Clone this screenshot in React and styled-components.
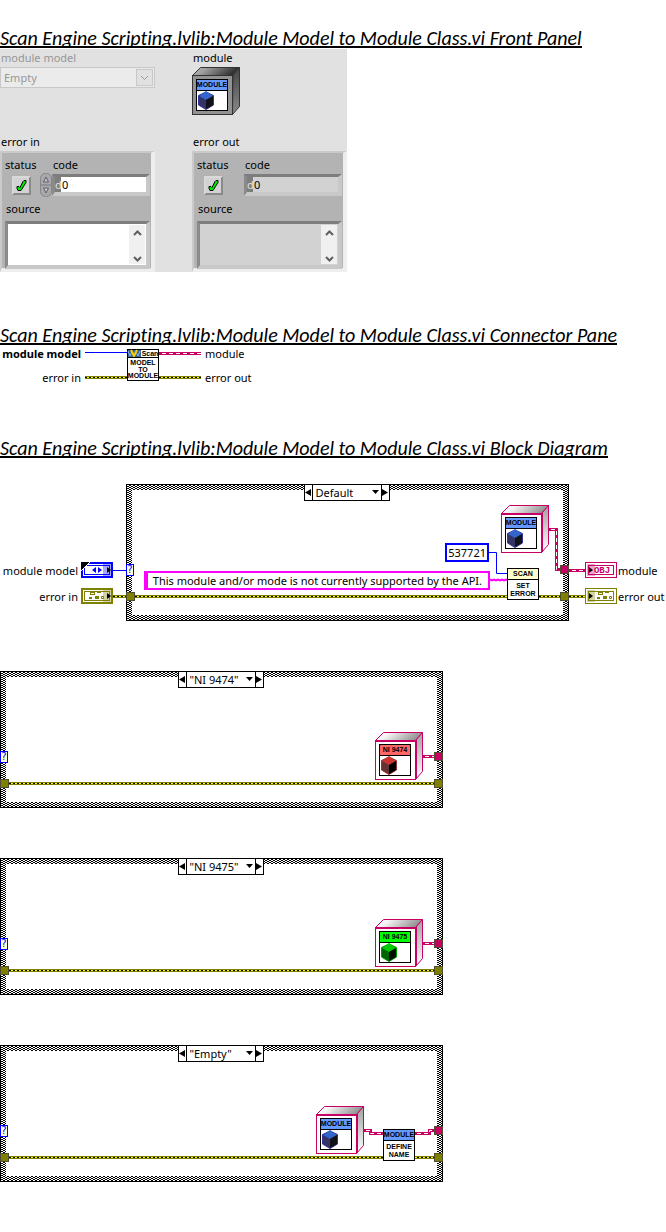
import React, { useId } from "react";
import styled, { createGlobalStyle } from "styled-components";

const PINK = "#c80064";
const OLIVE = "#808000";
const BLUE = "#0000ff";
const MAGENTA = "#ff00ff";

const GlobalStyle = createGlobalStyle`
  *, *::before, *::after { box-sizing: border-box; }
  body { margin: 0; background: #fff; }
  body, button, input, select, textarea {
    font: 11px/16px "Noto Sans", "Open Sans", sans-serif;
    color: #000;
  }
  svg { display: block; flex: none; }
`;

const Page = styled.main`
  display: flex;
  flex-direction: column;
  padding: 22px 0 50px;
`;

const Heading = styled.h2`
  align-self: flex-start;
  height: 26px;
  margin: ${(p) => p.$gap || 0}px 0 1px;
  border-bottom: 2px solid #000;
  overflow: hidden;
  white-space: nowrap;
  font: italic 400 20px/32px Carlito, Lato, sans-serif;
  font-variant-ligatures: none;
`;

/* ---------- front panel ---------- */

const FrontPanel = styled.section`
  display: grid;
  grid-template-columns: 155px 155px;
  column-gap: 37px;
  align-self: flex-start;
  background: #e1e1e1;
`;

const Control = styled.div`
  display: flex;
  flex-direction: column;
  align-items: flex-start;
  min-height: ${(p) => p.$min || 0}px;
`;

const Caption = styled.label`
  padding-left: 1px;
  height: 18px;
  line-height: 18px;
  color: ${(p) => (p.$dim ? "#979797" : "#000")};
  white-space: nowrap;
`;

const Combo = styled.div`
  position: relative;
  width: 100%;
  height: 21px;
  border: 1px solid #c8c8c8;
  background: #ebebeb;
`;

const ComboSelect = styled.select`
  width: 100%;
  height: 19px;
  padding: 0 3px;
  border: 0;
  appearance: none;
  background: transparent;
  color: #979797;
  opacity: 1;
`;

const ComboArrow = styled.svg`
  position: absolute;
  right: 1px;
  top: 1px;
  pointer-events: none;
`;

const ClusterBox = styled.div`
  width: 155px;
  height: 121px;
  padding: 4px 1px 0 3px;
  border-style: solid;
  border-width: 2px 4px 4px 2px;
  border-color: #cacaca #eeeeee #eeeeee #cacaca;
  background: #b3b3b3;
`;

const ClusterRow = styled.div`
  display: flex;
  align-items: center;
  height: ${(p) => p.$h}px;
`;

const FieldLabel = styled.label`
  flex: none;
  width: ${(p) => p.$w || "auto"};
  padding-left: ${(p) => p.$pad || 0};
  line-height: 16px;
`;

const Status = styled.span`
  position: relative;
  flex: none;
  width: 19px;
  height: 19px;
  margin: 0 9px 0 7px;
  border: 2px solid;
  border-color: #d8d8d8 #8a8a8a #8a8a8a #d8d8d8;
  background: #d2d2d2;
`;

const StatusInput = styled.input`
  position: absolute;
  inset: 0;
  width: 100%;
  height: 100%;
  margin: 0;
  opacity: 0;
`;

const SpinnerSlot = styled.span`
  flex: none;
  width: 12px;
`;

const Sunken = styled.div`
  display: flex;
  flex: 1;
  min-width: 0;
  height: ${(p) => p.$h}px;
  border: 3px solid;
  border-width: 3px 4px 4px 3px;
  border-color: #7d7d7d #c8c8c8 #c8c8c8 #8a8a8a;
  background: ${(p) => (p.$readOnly ? "#d2d2d2" : "#fff")};
`;

const Radix = styled.span`
  width: 6px;
  background: #7d7d7d;
  color: #e1e1e1;
  line-height: 15px;
`;

const CodeInput = styled.input`
  flex: 1;
  min-width: 0;
  padding: 0 1px;
  border: 0;
  background: transparent;
`;

const SourceText = styled.textarea`
  flex: 1;
  min-width: 0;
  border: 0;
  resize: none;
  overflow: hidden;
  background: transparent;
`;

const ScrollBar = styled.div`
  display: flex;
  flex-direction: column;
  justify-content: space-between;
  align-items: center;
  width: 16px;
  margin: 1px 1px 1px 0;
  padding: 4px 0 1px;
  background: #f0f0f0;
`;

function StatusLamp({ id }) {
  return (
    <Status>
      <StatusInput type="checkbox" id={id} defaultChecked />
      <svg width="15" height="15">
        <path d="M3 8.500h2l1 1L9 3.500l1-1h2v2L7 12.500H4l-1-2Z" fill="#00e600" stroke="#000" />
      </svg>
    </Status>
  );
}

function Spinner() {
  return (
    <svg width="12" height="24">
      <rect x=".5" y=".5" width="11" height="23" rx="5" fill="#a9a9ad" stroke="#85858a" />
      <path d="M1 12h10" stroke="#77777c" />
      <path d="M3.500 9 6 4l2.500 5Z" fill="#c9c9cd" stroke="#5f5f64" />
      <path d="M3.500 15 6 20l2.500-5Z" fill="#c9c9cd" stroke="#5f5f64" />
    </svg>
  );
}

function Chevron({ up }) {
  return (
    <svg width="9" height="7">
      <path d={up ? "M1 6 4.500 2.500 8 6" : "M1 1 4.500 4.500 8 1"} fill="none" stroke="#606060" strokeWidth="2" />
    </svg>
  );
}

function ErrorCluster({ readOnly }) {
  const id = useId();
  return (
    <ClusterBox>
      <ClusterRow $h={16}>
        <FieldLabel $w="48px" htmlFor={id + "s"}>status</FieldLabel>
        <FieldLabel htmlFor={id + "c"}>code</FieldLabel>
      </ClusterRow>
      <ClusterRow $h={24}>
        <StatusLamp id={id + "s"} />
        <SpinnerSlot>{!readOnly && <Spinner />}</SpinnerSlot>
        <Sunken $h={22} $readOnly={readOnly}>
          <Radix>d</Radix>
          <CodeInput id={id + "c"} defaultValue="0" readOnly={readOnly} />
        </Sunken>
      </ClusterRow>
      <ClusterRow $h={24}>
        <FieldLabel $pad="1px" htmlFor={id + "t"}>source</FieldLabel>
      </ClusterRow>
      <ClusterRow $h={48}>
        <Sunken $h={48} $readOnly={readOnly}>
          <SourceText id={id + "t"} readOnly={readOnly} />
          <ScrollBar>
            <Chevron up />
            <Chevron />
          </ScrollBar>
        </Sunken>
      </ClusterRow>
    </ClusterBox>
  );
}

/* ---------- icons ---------- */

const IconText = styled.text`
  font: 700 7px "Liberation Sans", sans-serif;
  text-anchor: middle;
`;

const cubes = {
  blue: { banner: "#6699ff", top: "#3366cc", left: "#333366", right: "#111118", edge: "#333399" },
  red: { banner: "#ff6666", top: "#cc3333", left: "#663333", right: "#000000", edge: "#993333" },
  green: { banner: "#00ff00", top: "#00cc00", left: "#006600", right: "#001100", edge: "#009900" },
};

function ModuleIcon({ label = "MODULE", cube = "blue", gray }) {
  const id = useId();
  const c = cubes[cube];
  const line = gray ? "#333333" : PINK;
  return (
    <svg width="48" height="48" role="img" aria-label={label}>
      <defs>
        <linearGradient id={id + "t"} x2="1" y2=".2">
          <stop offset="0" stopColor={gray ? "#b4b4b4" : "#ffffff"} />
          <stop offset=".3" stopColor={gray ? "#a0a0a0" : "#f4f4f4"} />
          <stop offset="1" stopColor={gray ? "#2a2a2a" : "#909090"} />
        </linearGradient>
        <linearGradient id={id + "r"} x2="0" y2="1">
          <stop offset="0" stopColor={gray ? "#444444" : "#a0a0a0"} />
          <stop offset="1" stopColor={gray ? "#8a8a8a" : "#ffffff"} />
        </linearGradient>
      </defs>
      <path d="M.5 8.500 8.500.5h39l-7 8Z" fill={`url(#${id}t)`} stroke={line} />
      <path d="M41 8 47.500.5v39l-7 8Z" fill={`url(#${id}r)`} stroke={line} />
      <rect x=".5" y="8.500" width="40" height="39" fill={gray ? "#929292" : "#fff"} stroke={line} />
      {!gray && <path d="M1 9h40v38" fill="none" stroke={line} strokeWidth="2" />}
      <rect x="4.500" y="12.500" width="31" height="31" fill="#fff" stroke="#000" />
      <rect x="5" y="13" width="30" height="10" fill={c.banner} />
      <path d="M5 23.500h30" stroke="#000" />
      <IconText x="20" y="20">{label}</IconText>
      <path d="M14 25 21.500 28.500v9.500L14 42.500 6.500 38v-9.500Z" fill={c.left} stroke={c.edge} />
      <path d="M14 24 21 29l-7 4-7-4Z" fill={c.top} />
      <path d="M14 33 21 29v9l-7 4Z" fill={c.right} />
    </svg>
  );
}

function NodeIcon({ banner, title, lines }) {
  return (
    <svg width="32" height="32" role="img" aria-label={[title, ...lines].join(" ")}>
      <rect x=".5" y=".5" width="31" height="31" fill="#fff" stroke="#000" />
      <rect x="1" y="1" width="30" height="10" fill={banner} />
      <path d="M1 11.500h30" stroke="#000" />
      <IconText x="16" y="8">{title}</IconText>
      {lines.map((l, i) => (
        <IconText key={l} x="16" y={20 + i * 8}>{l}</IconText>
      ))}
    </svg>
  );
}

function ScanIcon() {
  return (
    <svg width="32" height="32" role="img" aria-label="Scan Model to Module">
      <rect x=".5" y=".5" width="31" height="31" fill="#fff" stroke="#000" />
      <rect x="1" y="1" width="13" height="7" fill="#336699" />
      <path d="M1 2l2 5 2-4M9 3l2 4 2-5" fill="none" stroke="#8fb4d8" />
      <path d="M4 1 7 7l3-6" fill="none" stroke="#ffcc00" strokeWidth="2" />
      <path d="M1 8.500h30" stroke="#000" />
      <IconText x="23" y="7">Scan</IconText>
      <IconText x="16" y="16">MODEL</IconText>
      <IconText x="16" y="23">TO</IconText>
      <IconText x="16" y="29">MODULE</IconText>
    </svg>
  );
}

/* ---------- wires ---------- */

const ErrorWire = styled.div`
  flex: none;
  width: ${(p) => p.$w || "auto"};
  height: 3px;
  background:
    repeating-linear-gradient(90deg, #000 0 2px, #ffff00 2px 4px) 0 1px / 100% 1px no-repeat,
    ${OLIVE};
`;

const EnumWire = styled.div`
  flex: none;
  width: ${(p) => p.$w};
  height: 1px;
  background: ${BLUE};
`;

const ObjectWire = styled.div`
  flex: none;
  width: ${(p) => p.$w};
  height: 3px;
  background:
    repeating-linear-gradient(90deg, ${PINK} 0 3px, #fff 3px 7px) 0 1px / 100% 1px no-repeat,
    ${PINK};
`;

function ObjectPath({ d }) {
  return (
    <g fill="none">
      <path d={d} stroke={PINK} strokeWidth="3" />
      <path d={d} stroke="#fff" strokeDasharray="4 3" strokeDashoffset="-2" />
    </g>
  );
}

/* ---------- connector pane ---------- */

const Pane = styled.section`
  display: flex;
  gap: 4px;
  height: 32px;
  margin-top: 3px;
`;

const PaneColumn = styled.div`
  display: flex;
  flex-direction: column;
  gap: 8px;
  margin-top: -3px;
  width: ${(p) => p.$w || "auto"};
  text-align: ${(p) => p.$align || "left"};
`;

const PaneLabel = styled.span`
  font-weight: ${(p) => (p.$required ? 700 : 400)};
  line-height: 16px;
  white-space: nowrap;
`;

const PaneCenter = styled.div`
  display: flex;
`;

const PaneWires = styled.div`
  display: flex;
  flex-direction: column;
  justify-content: space-between;
  height: 30px;
  padding-top: 3px;
`;

/* ---------- block diagram ---------- */

const Diagram = styled.section`
  display: flex;
  flex-direction: column;
  gap: 50px;
  padding-top: 25px;
`;

const DiagramRow = styled.div`
  display: flex;
`;

const Terminals = styled.div`
  display: flex;
  flex: none;
  flex-direction: column;
  gap: 10px;
  width: ${(p) => p.$w};
  padding-top: 78px;
`;

const TerminalRow = styled.div`
  display: flex;
  align-items: center;
  justify-content: ${(p) => (p.$end ? "flex-end" : "flex-start")};
  height: 16px;
`;

const TerminalLabel = styled.span`
  margin: ${(p) => (p.$end ? "0 3px 0 0" : "0 0 0 1px")};
  padding-top: 2px;
  white-space: nowrap;
`;

const CaseFrame = styled.div`
  position: relative;
  flex: ${(p) => (p.$fluid ? "1 1 443px" : "0 0 443px")};
  max-width: ${(p) => (p.$fluid ? "none" : "100%")};
  height: 137px;
  border: 1px solid #000;
  background: repeating-conic-gradient(#000 0 25%, #fff 0 50%) 0 0 / 4px 2px;
`;

const CaseBody = styled.div`
  height: 100%;
  padding: 5px;
  background: #fff content-box;
`;

const Selector = styled.div`
  position: absolute;
  top: -1px;
  left: 50%;
  display: flex;
  width: 86px;
  height: 17px;
  margin-left: -44px;
  border: 1px solid #000;
  background: #fff;
`;

const StepButton = styled.button`
  display: grid;
  place-items: center;
  flex: none;
  width: 7px;
  padding: 0;
  border: 0;
  background: #fff;
`;

const CaseSelect = styled.select`
  flex: 1;
  min-width: 0;
  height: 15px;
  padding: 0 0 0 3px;
  border: solid #000;
  border-width: 0 1px;
  border-radius: 0;
  appearance: none;
  background: #fff;
  line-height: 15px;
`;

const SelectorArrow = styled.svg`
  position: absolute;
  right: 10px;
  top: 5px;
  pointer-events: none;
`;

/* Parts placed on the free canvas inside a case frame. */
const Placed = styled.div`
  position: absolute;
  top: ${(p) => p.$top - 1}px;
  right: ${(p) => p.$right - 1}px;
`;

const WireLayer = styled.svg`
  position: absolute;
  top: -1px;
  right: -1px;
`;

const FrameErrorWire = styled(ErrorWire)`
  position: absolute;
  top: 110px;
  left: 8px;
  right: 8px;
`;

const Tunnel = styled.span`
  position: absolute;
  top: ${(p) => p.$top - 1}px;
  ${(p) => p.$side}: -1px;
  width: 9px;
  height: 9px;
  border: 1px solid #4d4d33;
  background: ${(p) => p.$color};
`;

const CaseTerminal = styled.span`
  position: absolute;
  top: 79px;
  left: -1px;
  width: 8px;
  height: 12px;
  border: 1px solid ${BLUE};
  background: #ffffd8;
  color: ${BLUE};
  font: 10px/10px "DejaVu Sans", sans-serif;
  text-align: center;
`;

const Constant = styled.div`
  height: 19px;
  padding: 0 ${(p) => (p.$text ? "6px 0 5px" : "1px")};
  border: 2px solid ${(p) => p.$color};
  border-left-width: ${(p) => (p.$text ? 4 : 2)}px;
  background: #fff;
  line-height: 16px;
  white-space: nowrap;
`;

function Terminal({ kind, out }) {
  const color = { enum: BLUE, error: OLIVE, object: PINK }[kind];
  const line = out ? 1 : 2;
  return (
    <svg width="32" height="16">
      <rect
        x={line / 2}
        y={line / 2}
        width={32 - line}
        height={16 - line}
        fill="#fff"
        stroke={color}
        strokeWidth={line}
      />
      <rect x="3.500" y="3.500" width="25" height="9" fill="none" stroke={color} />
      {kind === "enum" && (
        <>
          <path d="M15 5v6l-4-3ZM17 5v6l4-3Z" fill={color} />
          <path d="M0 9V0h9Z" fill="#000" />
          <path d="M0 9 9 0" stroke="#fff" />
        </>
      )}
      {kind === "error" && (
        <g transform={out ? "translate(4 0)" : undefined} fill={color}>
          <path d="M9 4h5v3H9ZM10 5v1h3V5Z" fillRule="evenodd" />
          <path d="M16 4h4v1h-4ZM8 9h3v2H8ZM14 8h4v3h-4Z" />
          <path d="M20.500 8.500h2v2h-2Z" fill="none" stroke={color} />
        </g>
      )}
      {kind === "object" && (
        <text x="17" y="11" textAnchor="middle" fill={color} fontFamily="Liberation Mono, monospace" fontWeight="700" fontSize="9">
          OBJ
        </text>
      )}
      <rect x={out ? 2 : 22} y="2" width="8" height="12" fill={color} fillOpacity=".35" />
      <path d={out ? "M4 5v6l4-3Z" : "M26 5v6l4-3Z"} fill="#000" />
    </svg>
  );
}

function CaseStructure({ name, value, fluid, wires, children }) {
  return (
    <CaseFrame $fluid={fluid}>
      <CaseBody />
      <FrameErrorWire />
      <WireLayer width="443" height="137">{wires}</WireLayer>
      {children}
      <CaseTerminal>?</CaseTerminal>
      <Tunnel $side="left" $top={108} $color={OLIVE} />
      <Tunnel $side="right" $top={108} $color={OLIVE} />
      <Tunnel $side="right" $top={81} $color={PINK} />
      <Selector>
        <StepButton aria-label="Previous case">
          <svg width="6" height="7"><path d="M6 0v7L0 3.500Z" /></svg>
        </StepButton>
        <CaseSelect aria-label={name} defaultValue={value}>
          <option>{value}</option>
        </CaseSelect>
        <SelectorArrow width="7" height="4"><path d="M0 0h7L3.500 4Z" /></SelectorArrow>
        <StepButton aria-label="Next case">
          <svg width="6" height="7"><path d="M0 0v7l6-3.500Z" /></svg>
        </StepButton>
      </Selector>
    </CaseFrame>
  );
}

const VI = "Scan Engine Scripting.lvlib:Module Model to Module Class.vi";

export default function App() {
  return (
    <>
      <GlobalStyle />
      <Page>
        <Heading>{VI} Front Panel</Heading>
        <FrontPanel>
          <Control $min={84}>
            <Caption $dim htmlFor="model">module model</Caption>
            <Combo>
              <ComboSelect id="model" disabled defaultValue="Empty">
                <option>Empty</option>
              </ComboSelect>
              <ComboArrow width="17" height="17">
                <rect x=".5" y=".5" width="16" height="16" fill="#e1e1e1" stroke="#c8c8c8" />
                <path d="M5 7l3.500 3.500L12 7" fill="none" stroke="#979797" />
              </ComboArrow>
            </Combo>
          </Control>
          <Control $min={84}>
            <Caption as="span">module</Caption>
            <ModuleIcon gray />
          </Control>
          <Control>
            <Caption as="span">error in</Caption>
            <ErrorCluster />
          </Control>
          <Control>
            <Caption as="span">error out</Caption>
            <ErrorCluster readOnly />
          </Control>
        </FrontPanel>

        <Heading $gap={47}>{VI} Connector Pane</Heading>
        <Pane>
          <PaneColumn $w="81px" $align="right">
            <PaneLabel $required>module model</PaneLabel>
            <PaneLabel>error in</PaneLabel>
          </PaneColumn>
          <PaneCenter>
            <PaneWires>
              <EnumWire $w="42px" />
              <ErrorWire $w="42px" />
            </PaneWires>
            <ScanIcon />
            <PaneWires>
              <ObjectWire $w="42px" />
              <ErrorWire $w="42px" />
            </PaneWires>
          </PaneCenter>
          <PaneColumn>
            <PaneLabel>module</PaneLabel>
            <PaneLabel>error out</PaneLabel>
          </PaneColumn>
        </Pane>

        <Heading $gap={51}>{VI} Block Diagram</Heading>
        <Diagram>
          <DiagramRow>
            <Terminals $w="126px">
              <TerminalRow $end>
                <TerminalLabel $end>module model</TerminalLabel>
                <Terminal kind="enum" />
                <EnumWire $w="13px" />
              </TerminalRow>
              <TerminalRow $end>
                <TerminalLabel $end>error in</TerminalLabel>
                <Terminal kind="error" />
                <ErrorWire $w="13px" />
              </TerminalRow>
            </Terminals>
            <CaseStructure
              fluid
              name="Case"
              value="Default"
              wires={
                <>
                  <ObjectPath d="M423 45.500h7.500v40h5" />
                  <path d="M363 68.500h7.500v21h11" fill="none" stroke={BLUE} />
                  <path
                    d="M364 95.500l2 1 2-1 2 1 2-1 2 1 2-1 2 1 2-1 2 1"
                    fill="none"
                    stroke={MAGENTA}
                    strokeWidth="2"
                  />
                </>
              }
            >
              <Placed $top={21} $right={20}><ModuleIcon /></Placed>
              <Placed $top={59} $right={80}><Constant $color={BLUE}>537721</Constant></Placed>
              <Placed $top={87} $right={79}>
                <Constant $text $color={MAGENTA}>
                  This module and/or mode is not currently supported by the API.
                </Constant>
              </Placed>
              <Placed $top={84} $right={30}>
                <NodeIcon banner="#ffffcc" title="SCAN" lines={["SET", "ERROR"]} />
              </Placed>
            </CaseStructure>
            <Terminals $w="97px">
              <TerminalRow>
                <ObjectWire $w="16px" />
                <Terminal kind="object" out />
                <TerminalLabel>module</TerminalLabel>
              </TerminalRow>
              <TerminalRow>
                <ErrorWire $w="16px" />
                <Terminal kind="error" out />
                <TerminalLabel>error out</TerminalLabel>
              </TerminalRow>
            </Terminals>
          </DiagramRow>

          <DiagramRow>
            <CaseStructure name="Case" value={'"NI 9474"'} wires={<ObjectPath d="M423 85.500h12" />}>
              <Placed $top={61} $right={20}><ModuleIcon label="NI 9474" cube="red" /></Placed>
            </CaseStructure>
          </DiagramRow>

          <DiagramRow>
            <CaseStructure name="Case" value={'"NI 9475"'} wires={<ObjectPath d="M423 85.500h12" />}>
              <Placed $top={61} $right={20}><ModuleIcon label="NI 9475" cube="green" /></Placed>
            </CaseStructure>
          </DiagramRow>

          <DiagramRow>
            <CaseStructure
              name="Case"
              value={'"Empty"'}
              wires={
                <>
                  <ObjectPath d="M364 85.500h6.500v3h13" />
                  <ObjectPath d="M415 88.500h14.500v-3h5" />
                </>
              }
            >
              <Placed $top={61} $right={79}><ModuleIcon /></Placed>
              <Placed $top={84} $right={28}>
                <NodeIcon banner="#6699ff" title="MODULE" lines={["DEFINE", "NAME"]} />
              </Placed>
            </CaseStructure>
          </DiagramRow>
        </Diagram>
      </Page>
    </>
  );
}
